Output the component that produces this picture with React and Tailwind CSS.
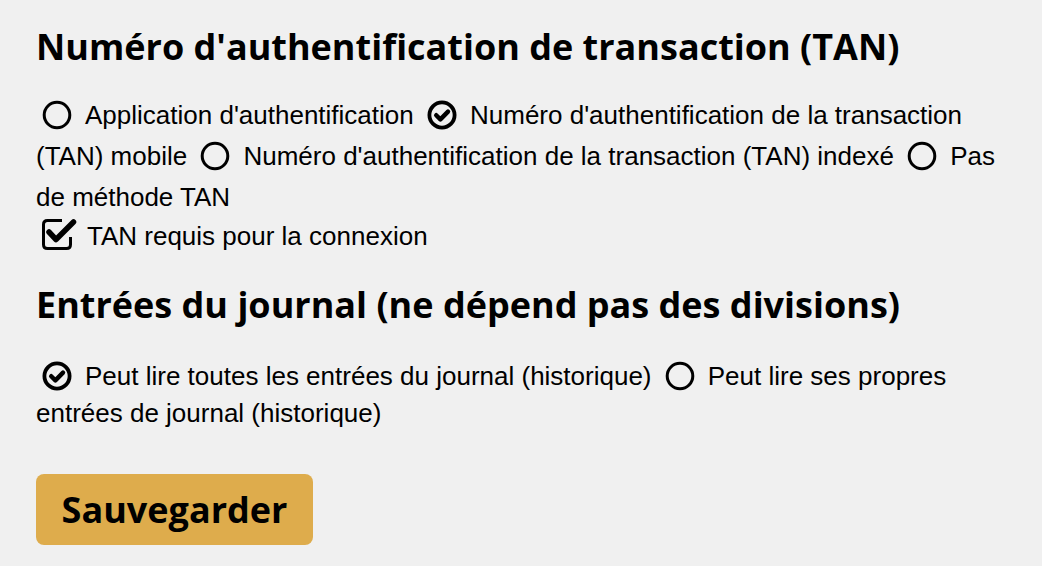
import React from "react";

const body = { fontFamily: '"Liberation Sans", Arial, sans-serif' };
const head = { fontFamily: '"Open Sans", "Noto Sans", sans-serif' };

function CircleIcon({ checked }) {
  return (
    <svg width="30" height="30" viewBox="0 0 30 30" fill="none" className="block">
      <circle cx="15" cy="15" r={checked ? 12.6 : 12.8} stroke="#000" strokeWidth={checked ? 3.8 : 3} />
      {checked && (
        <path d="M9.2 15.2 L13.4 19.4 L21 11.6" stroke="#000" strokeWidth="4.4" strokeLinecap="round" strokeLinejoin="round" />
      )}
    </svg>
  );
}

function CheckSquareIcon() {
  return (
    <svg width="36" height="32" viewBox="0 0 36 32" fill="none" className="block">
      <path
        d="M21 2.5 H6.5 Q2.5 2.5 2.5 6.5 V26.5 Q2.5 30.5 6.5 30.5 H25.5 Q29.5 30.5 29.5 26.5 V19"
        stroke="#000"
        strokeWidth="3"
      />
      <path d="M8 14 L15 21.5 L32.5 4" stroke="#000" strokeWidth="5.5" strokeLinecap="round" strokeLinejoin="round" />
    </svg>
  );
}

function Radio({ checked, children }) {
  return (
    <label className="inline">
      <span className="inline-block align-[-6px] ml-[6px] mr-[13px]">
        <CircleIcon checked={checked} />
      </span>
      {children}{" "}
    </label>
  );
}

export default function App() {
  return (
    <div className="min-h-[566px] bg-[#f0f0f0] text-black pl-[36px] pr-[24px] pt-[25px]" style={body}>
      <h2 className="text-[36px] leading-[44px] font-bold" style={head}>
        Numéro d'authentification de transaction (TAN)
      </h2>
      <div className="mt-[26px] text-[26px] leading-[41px]">
        <Radio>Application d'authentification</Radio>
        <Radio checked>Numéro d'authentification de la transaction (TAN) mobile</Radio>
        <Radio>Numéro d'authentification de la transaction (TAN) indexé</Radio>
        <Radio>Pas de méthode TAN</Radio>
      </div>
      <div className="text-[26px] leading-[36px]">
        <span className="inline-block align-[-5px] ml-[5px] mr-[10px]">
          <CheckSquareIcon />
        </span>
        TAN requis pour la connexion
      </div>
      <h2 className="mt-[29px] text-[36px] leading-[44px] font-bold" style={head}>
        Entrées du journal (ne dépend pas des divisions)
      </h2>
      <div className="mt-[31px] text-[26px] leading-[37px]">
        <Radio checked>Peut lire toutes les entrées du journal (historique)</Radio>
        <Radio>Peut lire ses propres entrées de journal (historique)</Radio>
      </div>
      <button
        className="mt-[42px] h-[71px] w-[277px] rounded-[8px] bg-[#deac4c] text-[36px] font-bold text-black"
        style={head}
      >
        Sauvegarder
      </button>
    </div>
  );
}
